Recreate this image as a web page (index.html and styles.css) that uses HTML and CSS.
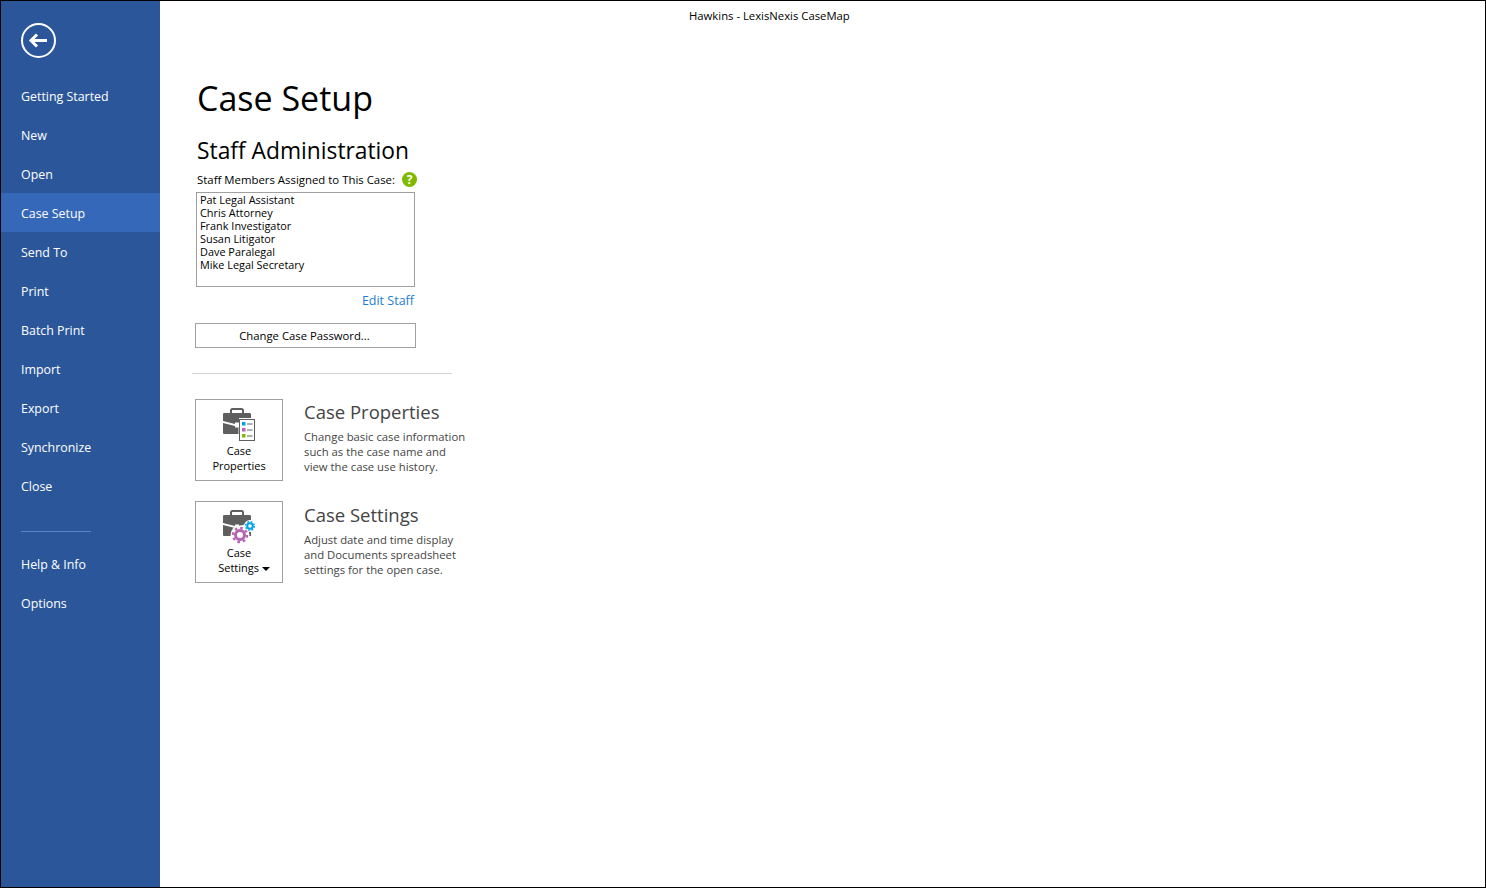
FILE: index.html
```html
<!DOCTYPE html>
<html lang="en">
<head>
<meta charset="utf-8">
<title>Hawkins - LexisNexis CaseMap</title>
<link rel="stylesheet" href="styles.css">
</head>
<body>
<div class="window">
  <nav class="sidebar">
    <div class="back">
      <svg width="36" height="36" viewBox="0 0 36 36"><circle cx="17.500" cy="17.500" r="16.500" fill="none" stroke="#fff" stroke-width="2"/><path d="M10 17.500h16" stroke="#fff" stroke-width="3" fill="none"/><path d="M16 11.500 10 17.500l6 6" stroke="#fff" stroke-width="3" fill="none"/></svg>
    </div>
    <a class="item">Getting Started</a>
    <a class="item">New</a>
    <a class="item">Open</a>
    <a class="item active">Case Setup</a>
    <a class="item">Send To</a>
    <a class="item">Print</a>
    <a class="item">Batch Print</a>
    <a class="item">Import</a>
    <a class="item">Export</a>
    <a class="item">Synchronize</a>
    <a class="item">Close</a>
    <div class="sep"></div>
    <a class="item">Help &amp; Info</a>
    <a class="item">Options</a>
  </nav>
  <main class="main">
    <div class="titlebar">Hawkins - LexisNexis CaseMap</div>
    <div class="content">
      <h1>Case Setup</h1>
      <h2>Staff Administration</h2>
      <div class="staff-label">Staff Members Assigned to This Case:
        <svg class="help" width="15" height="15" viewBox="0 0 15 15"><circle cx="7.500" cy="7.500" r="7.500" fill="#7fba00"/><text x="7.500" y="12" text-anchor="middle" class="help-q">?</text></svg>
      </div>
      <ul class="list">
        <li>Pat Legal Assistant</li>
        <li>Chris Attorney</li>
        <li>Frank Investigator</li>
        <li>Susan Litigator</li>
        <li>Dave Paralegal</li>
        <li>Mike Legal Secretary</li>
      </ul>
      <div class="edit-row"><a class="edit">Edit Staff</a></div>
      <button class="password">Change Case Password...</button>
      <div class="rule"></div>
      <section class="action first">
        <div class="tile">
          <svg class="tile-icon" width="36" height="34" viewBox="0 0 36 34">
            <path d="M9 5V2.500C9 1.500 9.500 1 10.500 1h9c1 0 1.500.5 1.500 1.500V5" fill="none" stroke="#5f5f5f" stroke-width="2"/>
            <path d="M1 6.500C1 5.500 1.500 5 2.500 5h25C28.500 5 29 5.500 29 6.500V10H17v4.500h-4V16L1 13z" fill="#5f5f5f"/>
            <path d="M1 15l12 3v1.500h3.500V26H2.500C1.500 26 1 25.500 1 24.500z" fill="#5f5f5f"/>
            <rect x="17.500" y="11.500" width="15" height="21" fill="#fff" stroke="#5f5f5f"/>
            <rect x="20" y="14" width="3.500" height="3.500" fill="#00a4e4"/><path d="M25 16h5.500" stroke="#5f5f5f"/>
            <rect x="20" y="20" width="3.500" height="3.500" fill="#b565b5"/><path d="M25 22h5.500" stroke="#5f5f5f"/>
            <rect x="20" y="26" width="3.500" height="3.500" fill="#7fba00"/><path d="M25 28h5.500" stroke="#5f5f5f"/>
          </svg>
          <span class="tile-text">Case<br>Properties</span>
        </div>
        <div class="desc">
          <h3>Case Properties</h3>
          <p>Change basic case information<br>such as the case name and<br>view the case use history.</p>
        </div>
      </section>
      <section class="action">
        <div class="tile">
          <svg class="tile-icon" width="36" height="34" viewBox="0 0 36 34">
            <path d="M9 5V2.500C9 1.500 9.500 1 10.500 1h9c1 0 1.500.5 1.500 1.500V5" fill="none" stroke="#5f5f5f" stroke-width="2"/>
            <path d="M1 6.500C1 5.500 1.500 5 2.500 5h25C28.500 5 29 5.500 29 6.500V13l-12 3v-1.500h-4V16L1 13z" fill="#5f5f5f"/>
            <path d="M1 15l12 3v1.500h4V18l12-3v11H2.500C1.500 26 1 25.500 1 24.500z" fill="#5f5f5f"/>
            <circle cx="18" cy="25" r="9.500" fill="#fff"/>
            <circle cx="28" cy="16" r="6" fill="#fff"/>
            <circle cx="18" cy="25" r="4.500" fill="#fff" stroke="#b565b5" stroke-width="3"/>
            <circle cx="18" cy="25" r="7" fill="none" stroke="#b565b5" stroke-width="2.500" stroke-dasharray="2.500 3"/>
            <circle cx="28" cy="16" r="2.800" fill="#fff" stroke="#00a4e4" stroke-width="2"/>
            <circle cx="28" cy="16" r="4.300" fill="none" stroke="#00a4e4" stroke-width="1.500" stroke-dasharray="1.700 1.700"/>
          </svg>
          <span class="tile-text">Case<br><span class="settings">Settings <i class="caret"></i></span></span>
        </div>
        <div class="desc lower">
          <h3>Case Settings</h3>
          <p>Adjust date and time display<br>and Documents spreadsheet<br>settings for the open case.</p>
        </div>
      </section>
    </div>
  </main>
</div>
</body>
</html>
```
FILE: styles.css
```css
* { box-sizing: border-box; }
html, body { margin: 0; height: 100%; }
body { font-family: "Open Sans", "Noto Sans", sans-serif; background: #fff; color: #000; overflow: hidden; }
.window { display: flex; height: 888px; border: 1px solid #000; }
.sidebar { width: 159px; flex: none; background: #2b579a; color: #fff; }
.back { height: 75px; padding: 22px 0 0 20px; }
.back svg { display: block; }
.item { display: block; height: 39px; padding: 1px 0 0 20px; line-height: 39px; font-size: 12.4px; }
.item.active { background: #3568b8; }
.sep { width: 70px; height: 1px; background: #5b84c4; margin: 26px 0 12px 20px; }
.main { flex: 1; min-width: 0; }
.titlebar { padding: 7px 0 0 529px; font-size: 11.3px; line-height: 16px; height: 23px; }
.content { padding-left: 32px; width: 340px; }
h1 { margin: 51px 0 0 5px; font-size: 34px; line-height: 46px; font-weight: 400; }
h2 { margin: 14px 0 0 5px; font-size: 22.8px; line-height: 32px; font-weight: 400; }
.staff-label { display: flex; align-items: center; margin: 3px 0 0 5px; height: 19px; font-size: 11.4px; gap: 7px; }
.help { flex: none; }
.help-q { fill: #fff; font-size: 12px; font-weight: 700; }
.list { list-style: none; margin: 3px 0 0 4px; padding: 0 3px; width: 219px; height: 95px; border: 1px solid #a0a0a0; font-size: 10.9px; line-height: 13px; }
.edit-row { width: 222px; height: 17px; margin-top: 1px; text-align: right; }
.edit { font-size: 12.500px; line-height: 17px; color: #1e7ed4; }
.password { display: block; width: 221px; height: 25px; margin: 18px 0 0 3px; padding: 0 2px 0 0; background: #fff; border: 1px solid #a0a0a0; font: 11.3px "Open Sans", "Noto Sans", sans-serif; color: #000; }
.rule { width: 260px; height: 1px; background: #d4d4d4; margin-top: 25px; }
.action { display: flex; margin: 20px 0 0 3px; }
.action.first { margin-top: 25px; }
.tile { flex: none; width: 88px; height: 82px; border: 1px solid #a0a0a0; display: flex; flex-direction: column; align-items: center; padding-top: 8px; }
.tile-icon { display: block; margin-left: 2px; }
.tile-text { display: block; margin-top: 1px; font-size: 11px; line-height: 15px; text-align: center; }
.settings { padding-left: 10px; }
.caret { display: inline-block; width: 0; height: 0; border: 4px solid transparent; border-top-color: #000; border-bottom: 0; vertical-align: middle; margin-left: 0; }
.desc { margin-left: 21px; color: #444; white-space: nowrap; }
.desc.lower { padding-top: 1px; }
h3 { margin: 0; font-size: 18.5px; line-height: 26px; font-weight: 400; }
.desc p { margin: 4px 0 0; font-size: 11.3px; line-height: 15px; }
```
